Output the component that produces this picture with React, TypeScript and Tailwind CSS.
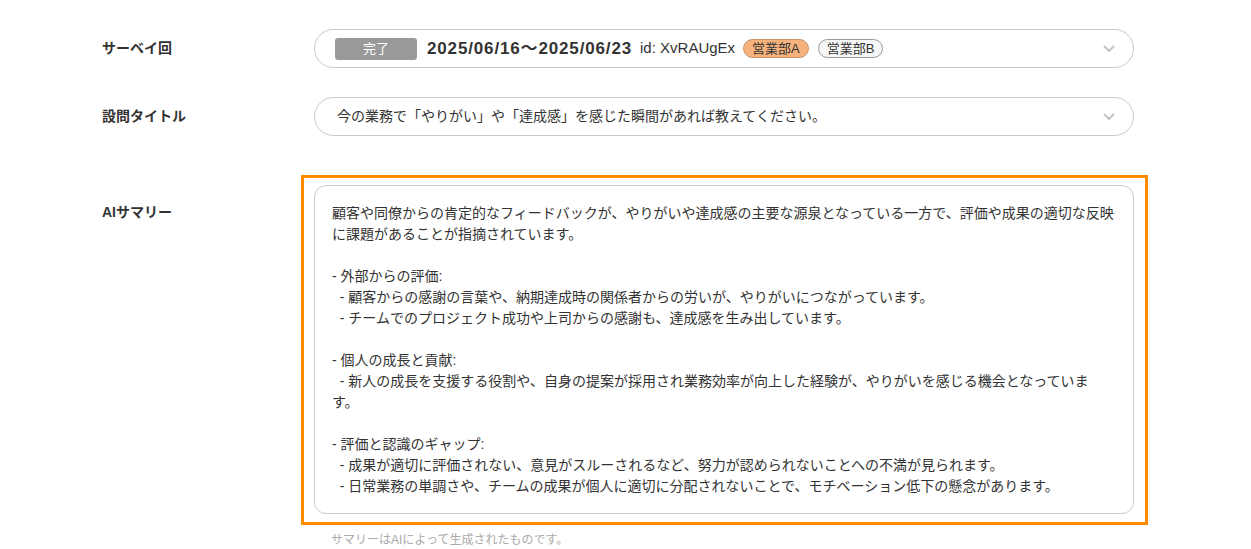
import React from "react";

const lines = [
  "顧客や同僚からの肯定的なフィードバックが、やりがいや達成感の主要な源泉となっている一方で、評価や成果の適切な反映",
  "に課題があることが指摘されています。",
  "",
  "- 外部からの評価:",
  "  - 顧客からの感謝の言葉や、納期達成時の関係者からの労いが、やりがいにつながっています。",
  "  - チームでのプロジェクト成功や上司からの感謝も、達成感を生み出しています。",
  "",
  "- 個人の成長と貢献:",
  "  - 新人の成長を支援する役割や、自身の提案が採用され業務効率が向上した経験が、やりがいを感じる機会となっていま",
  "す。",
  "",
  "- 評価と認識のギャップ:",
  "  - 成果が適切に評価されない、意見がスルーされるなど、努力が認められないことへの不満が見られます。",
  "  - 日常業務の単調さや、チームの成果が個人に適切に分配されないことで、モチベーション低下の懸念があります。",
];

function Chevron() {
  return (
    <svg width="12" height="8" viewBox="0 0 12 8" className="shrink-0">
      <path d="M1.5 1.5 L6 6 L10.5 1.5" fill="none" stroke="#c4c4c4" strokeWidth="2" strokeLinecap="round" strokeLinejoin="round" />
    </svg>
  );
}

export default function App() {
  const font = { fontFamily: '"Liberation Sans", "Noto Sans CJK JP", sans-serif' };
  return (
    <div className="w-[1251px] h-[549px] bg-white text-[#333] overflow-hidden" style={font}>
      <div className="pl-[102px] pt-[29px] grid grid-cols-[212px_820px]">
        {/* Row 1 */}
        <div className="h-[39px] flex items-center text-[14px] font-bold">サーベイ回</div>
        <div className="h-[39px] rounded-full border border-[#c8c8c8] flex items-center pl-[20px] pr-[18px]">
          <div className="flex items-center gap-2 flex-1 min-w-0">
            <span className="w-[82px] h-[22px] rounded-[3px] bg-[#999999] text-white text-[13px] flex items-center justify-center">完了</span>
            <span className="ml-[2px] text-[17px] font-bold tracking-[0.05em]">2025/06/16〜2025/06/23</span>
            <span className="text-[15px]">id: XvRAUgEx</span>
            <span className="h-[19px] px-[8px] rounded-full bg-[#f5b27c] border border-[#c99267] text-[13px] flex items-center">営業部A</span>
            <span className="h-[19px] px-[8px] rounded-full bg-[#f6f6f6] border border-[#999] text-[13px] flex items-center ml-[1px]">営業部B</span>
          </div>
          <Chevron />
        </div>

        {/* Row 2 */}
        <div className="mt-[29px] h-[39px] flex items-center text-[14px] font-bold">設問タイトル</div>
        <div className="mt-[29px] h-[39px] rounded-full border border-[#c8c8c8] flex items-center pl-[22px] pr-[18px]">
          <span className="flex-1 text-[14px]">今の業務で「やりがい」や「達成感」を感じた瞬間があれば教えてください。</span>
          <Chevron />
        </div>

        {/* Row 3 */}
        <div className="mt-[49px] pt-[17px] text-[14px] font-bold">AIサマリー</div>
        <div className="mt-[39px]">
          <div className="-ml-[13px] -mr-[14px] border-[3px] border-[#ff8c00] pl-[10px] pr-[11px] pt-[7px] pb-[8px]">
            <div className="rounded-[12px] border border-[#c8c8c8] px-[17px] pt-[17px] pb-[16px] text-[14px] leading-[21px]">
              {lines.map((l, i) => (
                <div key={i} className="whitespace-pre h-[21px]">{l}</div>
              ))}
            </div>
          </div>
          <div className="mt-[6px] pl-[17px] text-[12px] text-[#aaaaaa]">サマリーはAIによって生成されたものです。</div>
        </div>
      </div>
    </div>
  );
}
